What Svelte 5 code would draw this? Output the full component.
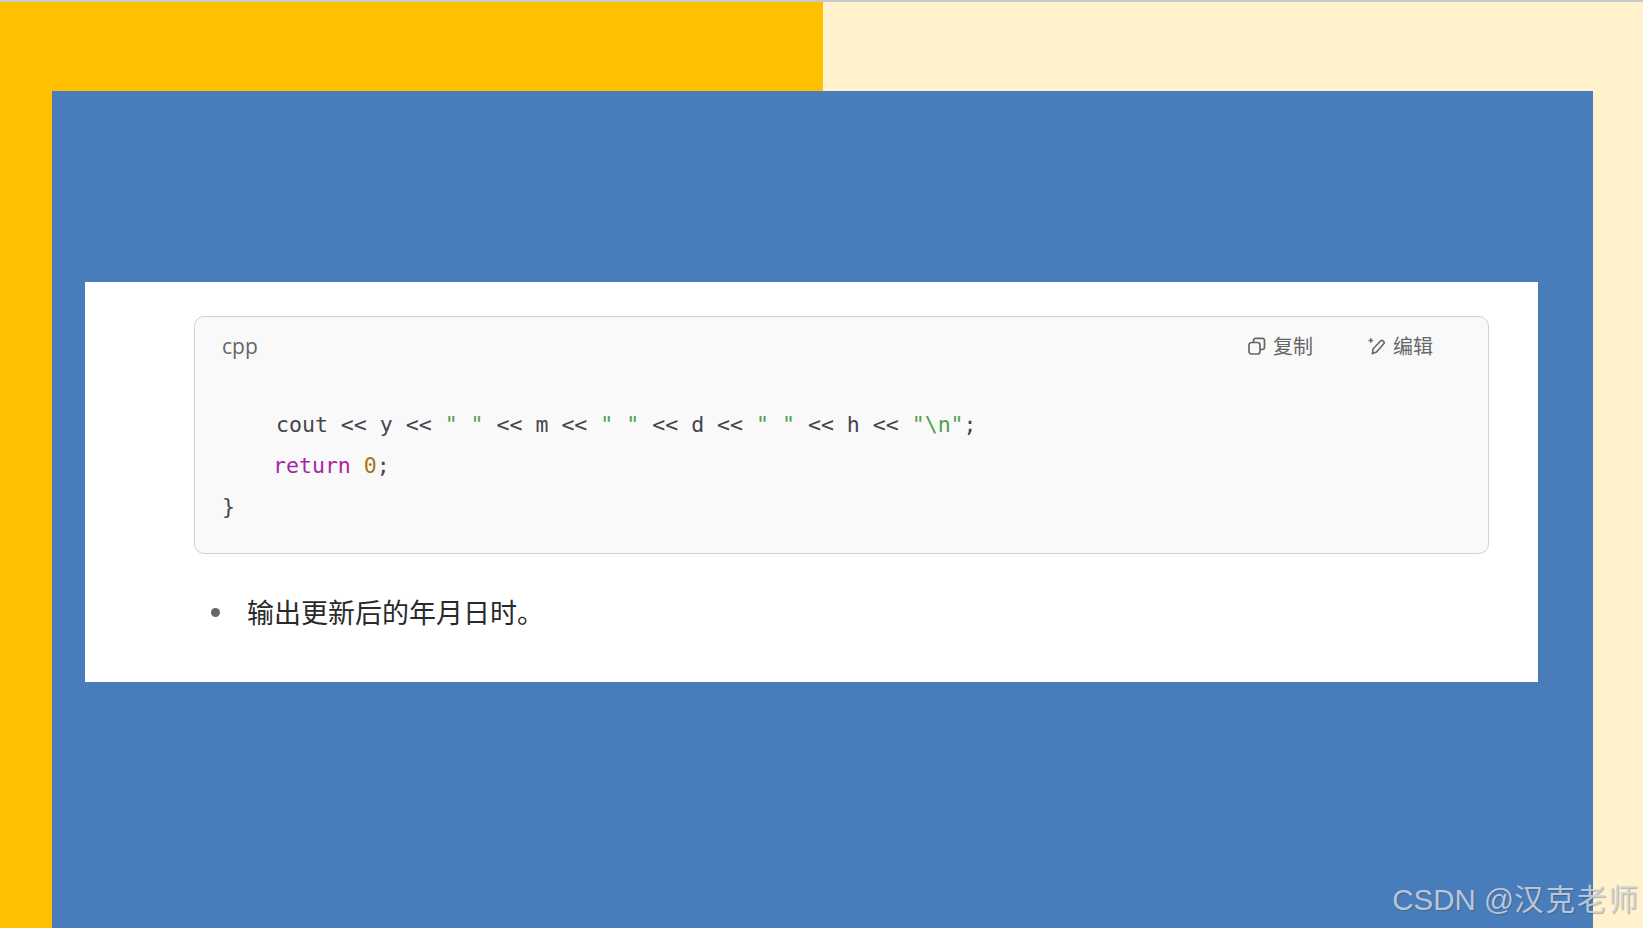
<script>
  const tokens = [
    ['cout << y << ', ''],
    ['" "', 'str'],
    [' << m << ', ''],
    ['" "', 'str'],
    [' << d << ', ''],
    ['" "', 'str'],
    [' << h << ', ''],
    ['"\\n"', 'str'],
    [';', ''],
  ];
</script>

<div class="page">
  <div class="topline"></div>
  <div class="panel">
    <div class="card">
      <div class="code-box">
        <div class="code-head">
          <span class="lang">cpp</span>
          <div class="actions">
            <span class="action copy">
              <svg width="18" height="18" viewBox="0 0 18 18" fill="none" stroke="#666" stroke-width="1.700">
                <rect x="1" y="5.500" width="11" height="11.500" rx="2.500" />
                <path d="M5.500 5.500V3.500a2.200 2.200 0 0 1 2.200-2.200h6.600a2.200 2.200 0 0 1 2.200 2.200v6.800a2.200 2.200 0 0 1-2.200 2.200H12" />
              </svg>
              复制
            </span>
            <span class="action edit">
              <svg width="18" height="18" viewBox="0 0 18 18" fill="none" stroke="#666" stroke-width="1.600">
                <path d="M4.500 16.500l0.500-4.500 7.500-8a2 2 0 0 1 2.800 0l0.200 0.200a2 2 0 0 1 0 2.800l-7 8z" />
                <path d="M0.500 3.500h4.500M2.800 1.200v4.600" stroke-width="1.400" />
              </svg>
              编辑
            </span>
          </div>
        </div>
        <pre class="code"><code class="line first">{#each tokens as [text, kind]}<span class={kind}>{text}</span>{/each}</code><code class="line second"><span class="kw">return</span> <span class="num">0</span>;</code><code class="line">{'}'}</code></pre>
      </div>
      <ul class="notes">
        <li>输出更新后的年月日时。</li>
      </ul>
    </div>
  </div>
  <div class="watermark">CSDN @<span class="cjk">汉克老师</span></div>
</div>

<style>
  :global(body) {
    margin: 0;
    overflow: hidden;
  }
  .page {
    position: relative;
    box-sizing: border-box;
    height: 928px;
    padding: 0 50px 0 52px;
    background: linear-gradient(to right, #ffc000 823px, #fff2cc 823px);
    overflow: hidden;
  }
  .topline {
    height: 2px;
    margin: 0 -50px 89px -52px;
    background: #c9c9c9;
  }
  .panel {
    box-sizing: border-box;
    height: 837px;
    padding: 191px 55px 0 33px;
    background: #497cba;
  }
  .card {
    box-sizing: border-box;
    height: 400px;
    padding: 34px 49px 0 109px;
    background: #fff;
  }
  .code-box {
    box-sizing: border-box;
    height: 238px;
    border: 1px solid #d0d0d0;
    border-radius: 10px;
    background: #f9f9f9;
  }
  .code-head {
    display: flex;
    justify-content: space-between;
    align-items: center;
    height: 57px;
    padding: 0 55px 0 27px;
  }
  .lang {
    font: 21px "Open Sans", "Noto Sans", sans-serif;
    color: #666;
  }
  .actions {
    display: flex;
    gap: 55px;
  }
  .action {
    display: flex;
    align-items: center;
    gap: 7px;
    font: 20px "Noto Sans CJK SC", sans-serif;
    color: #666;
  }
  .code {
    margin: 0;
    padding: 30px 0 0 27px;
    font: 21.55px/41px "DejaVu Sans Mono", monospace;
    color: #44464c;
  }
  .line {
    display: block;
    font: inherit;
  }
  .first {
    margin-left: 54px;
  }
  .second {
    margin-left: 51px;
  }
  .str {
    color: #50a14f;
  }
  .kw {
    color: #a626a4;
  }
  .num {
    color: #a8760f;
  }
  .notes {
    margin: 35px 0 0;
    padding: 0 0 0 17px;
    list-style: none;
    font: 27px/46px "Noto Sans CJK SC", sans-serif;
    color: #2a2a2a;
  }
  .notes li {
    display: flex;
    align-items: center;
    gap: 27px;
  }
  .notes li::before {
    content: "";
    width: 9px;
    height: 9px;
    border-radius: 50%;
    background: #666;
  }
  .watermark {
    position: absolute;
    right: 3px;
    bottom: 10px;
    font: 29.500px "Liberation Sans", "Noto Sans CJK SC", sans-serif;
    color: rgba(205, 215, 228, 0.85);
    text-shadow: 1px 1px 1px rgba(60, 60, 60, 0.35);
    white-space: nowrap;
  }
  .cjk {
    letter-spacing: 2px;
  }
</style>
